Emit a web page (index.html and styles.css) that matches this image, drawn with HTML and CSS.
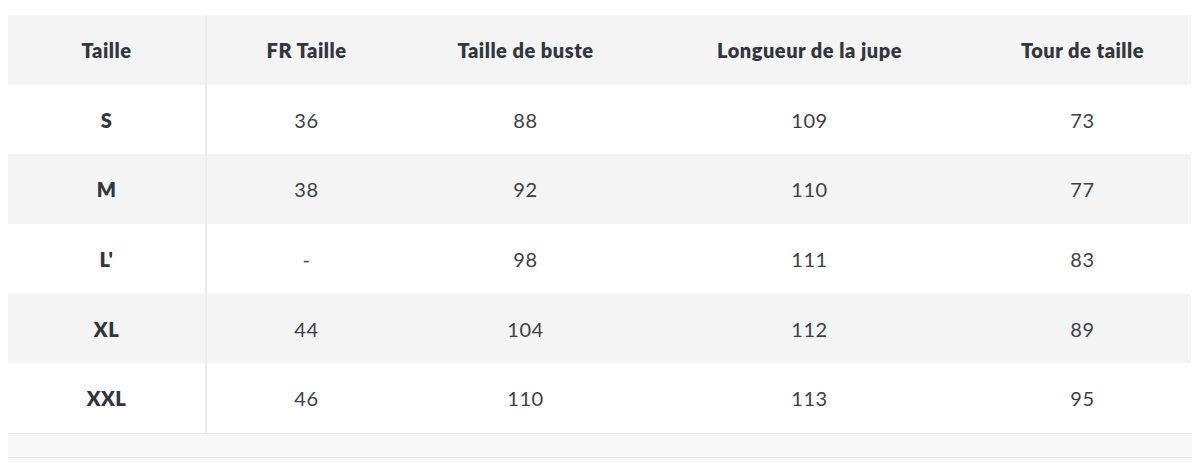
FILE: index.html
```html
<!DOCTYPE html>
<html lang="fr">
<head>
<meta charset="utf-8">
<title>Guide des tailles</title>
<link rel="stylesheet" href="styles.css">
</head>
<body>
<div class="wrap">
  <table class="sizes">
    <colgroup>
      <col class="c1"><col class="c2"><col class="c3"><col class="c4"><col class="c5">
    </colgroup>
    <thead>
      <tr><th>Taille</th><th>FR Taille</th><th>Taille de buste</th><th>Longueur de la jupe</th><th>Tour de taille</th></tr>
    </thead>
    <tbody>
      <tr><th>S</th><td>36</td><td>88</td><td>109</td><td>73</td></tr>
      <tr><th>M</th><td>38</td><td>92</td><td>110</td><td>77</td></tr>
      <tr><th>L'</th><td>-</td><td>98</td><td>111</td><td>83</td></tr>
      <tr><th>XL</th><td>44</td><td>104</td><td>112</td><td>89</td></tr>
      <tr><th>XXL</th><td>46</td><td>110</td><td>113</td><td>95</td></tr>
    </tbody>
  </table>
  <div class="foot"></div>
</div>
</body>
</html>
```

FILE: styles.css
```css
html, body {
  margin: 0;
  padding: 0;
  background: #ffffff;
}
body {
  font-family: Lato, "Open Sans", "Liberation Sans", sans-serif;
  color: #3b3e4a;
}
.wrap {
  padding: 15px 8px 0 8px;
}
.sizes {
  width: 100%;
  border-collapse: collapse;
  table-layout: fixed;
}
.c1 { width: 198px; }
.c2 { width: 200px; }
.c3 { width: 239px; }
.c4 { width: 329px; }
.c5 { width: auto; }
.sizes tr {
  height: 69.7px;
}
.sizes th, .sizes td {
  padding: 0;
  text-align: center;
  vertical-align: middle;
  font-size: 20px;
}
.sizes th {
  font-weight: 800;
  color: #33363f;
  letter-spacing: 0.5px;
}
.sizes td {
  font-weight: 400;
  color: #3c3f49;
  letter-spacing: 0.6px;
}
.sizes tr > :first-child {
  border-right: 2px solid #ececec;
}
.sizes thead tr,
.sizes tbody tr:nth-child(even) {
  background: #f4f4f4;
}
.sizes thead th:first-child {
  border-right-color: #ebebeb;
}
.foot {
  height: 23px;
  background: #f8f8f8;
  border-top: 1px solid #e8e8e8;
  border-bottom: 1px solid #e8e8e8;
}
```
